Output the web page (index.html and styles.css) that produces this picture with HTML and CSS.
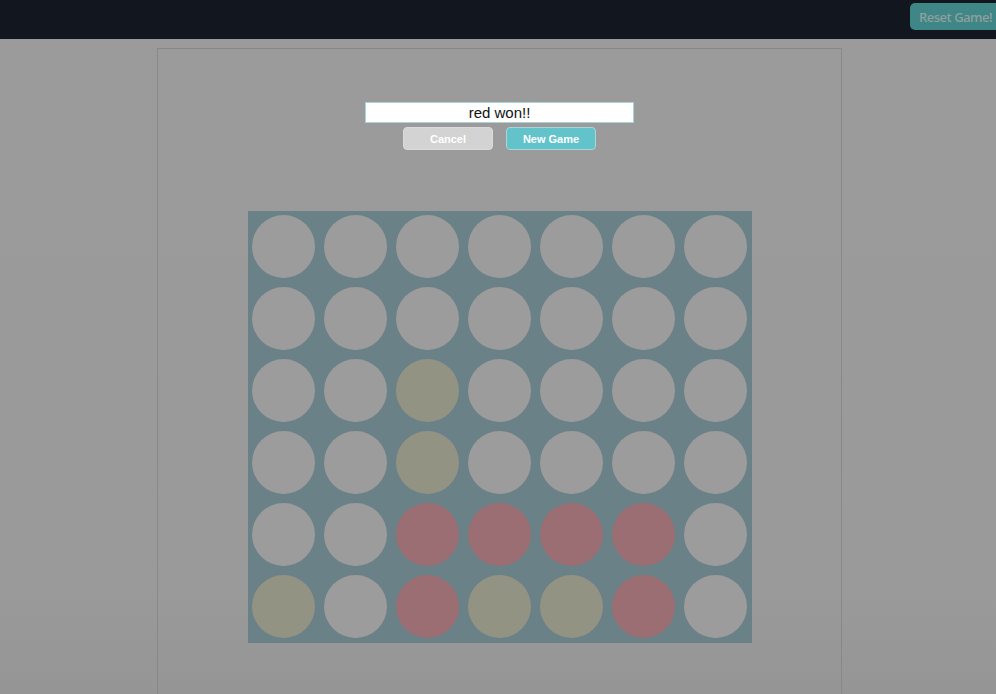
FILE: index.html
```html
<!DOCTYPE html>
<html>
<head>
<meta charset="utf-8">
<link rel="stylesheet" href="styles.css">
</head>
<body>
<header class="topbar">
  <button class="reset">Reset Game!</button>
</header>
<main class="panel">
  <div class="dialog">
    <input class="message" type="text" value="red won!!">
    <div class="actions">
      <button class="btn cancel">Cancel</button>
      <button class="btn newgame">New Game</button>
    </div>
  </div>
  <div class="board">
    <span class="cell"></span><span class="cell"></span><span class="cell"></span><span class="cell"></span><span class="cell"></span><span class="cell"></span><span class="cell"></span>
    <span class="cell"></span><span class="cell"></span><span class="cell"></span><span class="cell"></span><span class="cell"></span><span class="cell"></span><span class="cell"></span>
    <span class="cell"></span><span class="cell"></span><span class="cell yellow"></span><span class="cell"></span><span class="cell"></span><span class="cell"></span><span class="cell"></span>
    <span class="cell"></span><span class="cell"></span><span class="cell yellow"></span><span class="cell"></span><span class="cell"></span><span class="cell"></span><span class="cell"></span>
    <span class="cell"></span><span class="cell"></span><span class="cell red"></span><span class="cell red"></span><span class="cell red"></span><span class="cell red"></span><span class="cell"></span>
    <span class="cell yellow"></span><span class="cell"></span><span class="cell red"></span><span class="cell yellow"></span><span class="cell yellow"></span><span class="cell red"></span><span class="cell"></span>
  </div>
</main>
</body>
</html>
```
FILE: styles.css
```css
html, body {
  margin: 0;
  padding: 0;
  height: 100%;
  overflow: hidden;
}
body {
  background: linear-gradient(#9b9b9b, #9a9a9a 85%, #959595);
  font-family: "Liberation Sans", Arial, sans-serif;
}
.topbar {
  height: 39px;
  background: #12161f;
  display: flex;
  justify-content: flex-end;
  align-items: flex-start;
}
.reset {
  margin-top: 3px;
  margin-right: -6px;
  width: 92px;
  height: 27px;
  padding: 0 0 0 9px;
  text-align: left;
  background: #3e8786;
  color: #8f9e9f;
  border: none;
  border-radius: 5px;
  font-family: "Open Sans", sans-serif;
  font-size: 13px;
  font-weight: 600;
  letter-spacing: -0.5px;
}
.panel {
  box-sizing: border-box;
  margin: 9px 0 0 157px;
  width: 685px;
  height: 646px;
  border: 1px solid #888888;
  border-bottom: none;
  display: flex;
  flex-direction: column;
  align-items: center;
}
.dialog {
  margin-top: 53px;
  display: flex;
  flex-direction: column;
  align-items: center;
  gap: 4px;
}
.message {
  box-sizing: border-box;
  width: 269px;
  height: 21px;
  margin: 0;
  padding: 0;
  border: 1px solid #a9d3d8;
  background: #ffffff;
  text-align: center;
  font-family: "Liberation Sans", Arial, sans-serif;
  font-size: 15px;
  color: #111;
  outline: none;
}
.actions {
  display: flex;
  gap: 13px;
}
.btn {
  box-sizing: border-box;
  width: 90px;
  height: 23px;
  border-radius: 4px;
  font-family: "Liberation Sans", Arial, sans-serif;
  font-size: 11px;
  font-weight: bold;
  color: #ffffff;
  padding: 0;
}
.cancel {
  background: #d3d3d3;
  border: 1px solid #dadada;
}
.newgame {
  background: #62c3cb;
  border: 1px solid #a9d6da;
}
.board {
  margin-top: 61px;
  align-self: flex-start;
  margin-left: 90px;
  width: 504px;
  height: 432px;
  background: #6a8188;
  display: grid;
  grid-template-columns: repeat(7, 72px);
  grid-template-rows: repeat(6, 72px);
  place-items: start;
}
.cell {
  margin: 4px;
  width: 63px;
  height: 63px;
  border-radius: 50%;
  background: #9c9c9c;
}
.cell.yellow {
  background: #939384;
}
.cell.red {
  background: #9b6e73;
}
```
